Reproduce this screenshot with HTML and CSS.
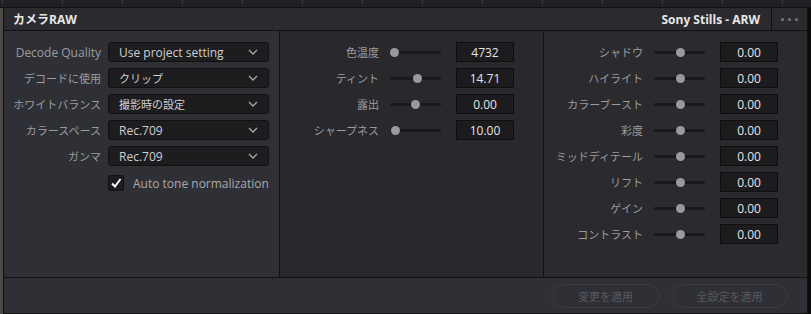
FILE: index.html
```html
<!DOCTYPE html>
<html lang="ja">
<head>
  <meta charset="UTF-8">
  <title>カメラRAW</title>
  <link rel="stylesheet" href="styles.css">
</head>
<body>

  <div class="ruler"></div>

  <div class="frame">
    <div class="edge"></div>

    <div class="panel">
      <div class="header">
        <div class="title">カメラRAW</div>
        <div class="preset">Sony Stills - ARW</div>
        <div class="more"><span></span><span></span><span></span></div>
      </div>

      <div class="body">
        <!-- decode settings -->
        <div class="col col-left">
          <div class="row">
            <label>Decode Quality</label>
            <div class="select">Use project setting <svg viewBox="0 0 10 6"><polyline points="1,1 5,5 9,1"/></svg></div>
          </div>
          <div class="row">
            <label class="ja">デコードに使用</label>
            <div class="select ja">クリップ <svg viewBox="0 0 10 6"><polyline points="1,1 5,5 9,1"/></svg></div>
          </div>
          <div class="row">
            <label class="ja">ホワイトバランス</label>
            <div class="select ja">撮影時の設定 <svg viewBox="0 0 10 6"><polyline points="1,1 5,5 9,1"/></svg></div>
          </div>
          <div class="row">
            <label class="ja">カラースペース</label>
            <div class="select">Rec.709 <svg viewBox="0 0 10 6"><polyline points="1,1 5,5 9,1"/></svg></div>
          </div>
          <div class="row">
            <label class="ja">ガンマ</label>
            <div class="select">Rec.709 <svg viewBox="0 0 10 6"><polyline points="1,1 5,5 9,1"/></svg></div>
          </div>
          <div class="row">
            <span></span>
            <div class="check">
              <span class="box"><svg viewBox="0 0 12 12"><polyline points="2,6.5 5,9.5 10.5,2"/></svg></span>
              Auto tone normalization
            </div>
          </div>
        </div>

        <!-- image adjustments -->
        <div class="col col-mid">
          <div class="srow">
            <label class="ja">色温度</label>
            <div class="slider"><i style="left: 4px"></i></div>
            <div class="value">4732</div>
          </div>
          <div class="srow">
            <label class="ja">ティント</label>
            <div class="slider"><i style="left: 27px"></i></div>
            <div class="value">14.71</div>
          </div>
          <div class="srow">
            <label class="ja">露出</label>
            <div class="slider"><i style="left: 25px"></i></div>
            <div class="value">0.00</div>
          </div>
          <div class="srow">
            <label class="ja">シャープネス</label>
            <div class="slider"><i style="left: 5px"></i></div>
            <div class="value">10.00</div>
          </div>
        </div>

        <!-- tone adjustments -->
        <div class="col col-right">
          <div class="srow">
            <label class="ja">シャドウ</label>
            <div class="slider"><i style="left: 26px"></i></div>
            <div class="value">0.00</div>
          </div>
          <div class="srow">
            <label class="ja">ハイライト</label>
            <div class="slider"><i style="left: 26px"></i></div>
            <div class="value">0.00</div>
          </div>
          <div class="srow">
            <label class="ja">カラーブースト</label>
            <div class="slider"><i style="left: 26px"></i></div>
            <div class="value">0.00</div>
          </div>
          <div class="srow">
            <label class="ja">彩度</label>
            <div class="slider"><i style="left: 26px"></i></div>
            <div class="value">0.00</div>
          </div>
          <div class="srow">
            <label class="ja">ミッドディテール</label>
            <div class="slider"><i style="left: 26px"></i></div>
            <div class="value">0.00</div>
          </div>
          <div class="srow">
            <label class="ja">リフト</label>
            <div class="slider"><i style="left: 26px"></i></div>
            <div class="value">0.00</div>
          </div>
          <div class="srow">
            <label class="ja">ゲイン</label>
            <div class="slider"><i style="left: 26px"></i></div>
            <div class="value">0.00</div>
          </div>
          <div class="srow">
            <label class="ja">コントラスト</label>
            <div class="slider"><i style="left: 26px"></i></div>
            <div class="value">0.00</div>
          </div>
        </div>
      </div>

      <div class="footer">
        <button class="btn btn-apply">変更を適用</button>
        <button class="btn btn-all">全設定を適用</button>
      </div>
    </div>
  </div>

</body>
</html>
```

FILE: styles.css
```css
body {
  margin: 0;
  background-color: #0c0c0d;
  font-family: 'Open Sans', 'Noto Sans CJK JP', sans-serif;
  font-size: 12px;
  width: 811px;
  height: 314px;
  overflow: hidden;
}

.ja {
  font-size: 11px;
}

.ruler {
  height: 7px;
  border-bottom: 1px solid #111113;
  background-color: #202024;
  background-image: repeating-linear-gradient(90deg, transparent 0, transparent 2px, #3b3b40 2px, #3b3b40 3px, transparent 3px, transparent 60px);
  background-size: 100% 4px;
  background-repeat: no-repeat;
}

.frame {
  display: flex;
  height: 306px;
}

.edge {
  width: 3px;
  background-color: #4d4a47;
}

.panel {
  width: 803px;
  border-left: 1px solid #111113;
  border-right: 1px solid #111113;
  display: flex;
  flex-direction: column;
}

.header {
  height: 22px;
  border-bottom: 1px solid #111113;
  background-color: #2a2a2f;
  display: flex;
  align-items: center;
  font-weight: bold;
  color: #e8e8e8;
}

.title {
  flex: 1;
  padding-left: 9px;
}

.preset {
  padding-right: 11px;
}

.more {
  width: 35px;
  height: 22px;
  border-left: 1px solid #111113;
  display: flex;
  align-items: center;
  justify-content: center;
  gap: 4px;
}

.more span {
  width: 3px;
  height: 3px;
  border-radius: 50%;
  background-color: #77777c;
}

.body {
  height: 246px;
  border-bottom: 1px solid #111113;
  display: grid;
  grid-template-columns: 275px 263px 263px;
  gap: 1px;
  background-color: #111113;
}

.col {
  padding-top: 11px;
  display: flex;
  flex-direction: column;
  gap: 6px;
}

.col-left {
  background-color: #2f3036;
}

.col-mid {
  background-color: #28282d;
}

.col-right {
  background-color: #2a2a2f;
}

label {
  color: #9c9c9f;
  text-align: right;
  white-space: nowrap;
}

.row {
  display: grid;
  grid-template-columns: 97px 161px;
  column-gap: 7px;
  align-items: center;
  height: 20px;
}

.select {
  height: 18px;
  border: 1px solid #111112;
  border-radius: 3px;
  background-color: #1d1d20;
  color: #cfcfd1;
  padding-left: 10px;
  display: flex;
  align-items: center;
  justify-content: space-between;
}

.select svg {
  width: 10px;
  height: 6px;
  margin-right: 10px;
  fill: none;
  stroke: #a5a5a8;
  stroke-width: 1.4;
}

.row:last-child {
  margin-top: 1px;
}

.check {
  display: flex;
  align-items: center;
  gap: 9px;
  color: #a9a9ac;
  white-space: nowrap;
}

.box {
  width: 14px;
  height: 14px;
  border: 1px solid #111;
  border-radius: 2px;
  background-color: #1d1d20;
  display: flex;
  align-items: center;
  justify-content: center;
}

.box svg {
  width: 12px;
  height: 12px;
  fill: none;
  stroke: #ffffff;
  stroke-width: 2;
}

.srow {
  display: grid;
  grid-template-columns: 99px 51px 62px;
  column-gap: 11px;
  align-items: center;
  height: 20px;
}

.srow .value {
  margin-left: 4px;
}

.slider {
  position: relative;
  height: 3px;
  border-radius: 2px;
  background-color: #19191b;
}

.slider i {
  position: absolute;
  top: -3px;
  width: 9px;
  height: 9px;
  margin-left: -4px;
  border-radius: 50%;
  background-color: #9a9a9c;
}

.value {
  height: 18px;
  border: 1px solid #0f0f10;
  background-color: #1c1c1e;
  color: #e4e4e6;
  display: flex;
  align-items: center;
  justify-content: center;
}

.footer {
  flex: 1;
  background-color: #2f3036;
  border-bottom: 1px solid #111113;
  display: flex;
  justify-content: flex-end;
  align-items: center;
  gap: 11px;
  padding-right: 19px;
}

.btn {
  height: 24px;
  border: 1px solid #3a3b40;
  border-radius: 12px;
  background-color: transparent;
  color: #58595d;
  font-family: 'Noto Sans CJK JP', sans-serif;
  font-size: 11px;
  padding: 0;
}

.btn-apply {
  width: 109px;
}

.btn-all {
  width: 117px;
}
```
